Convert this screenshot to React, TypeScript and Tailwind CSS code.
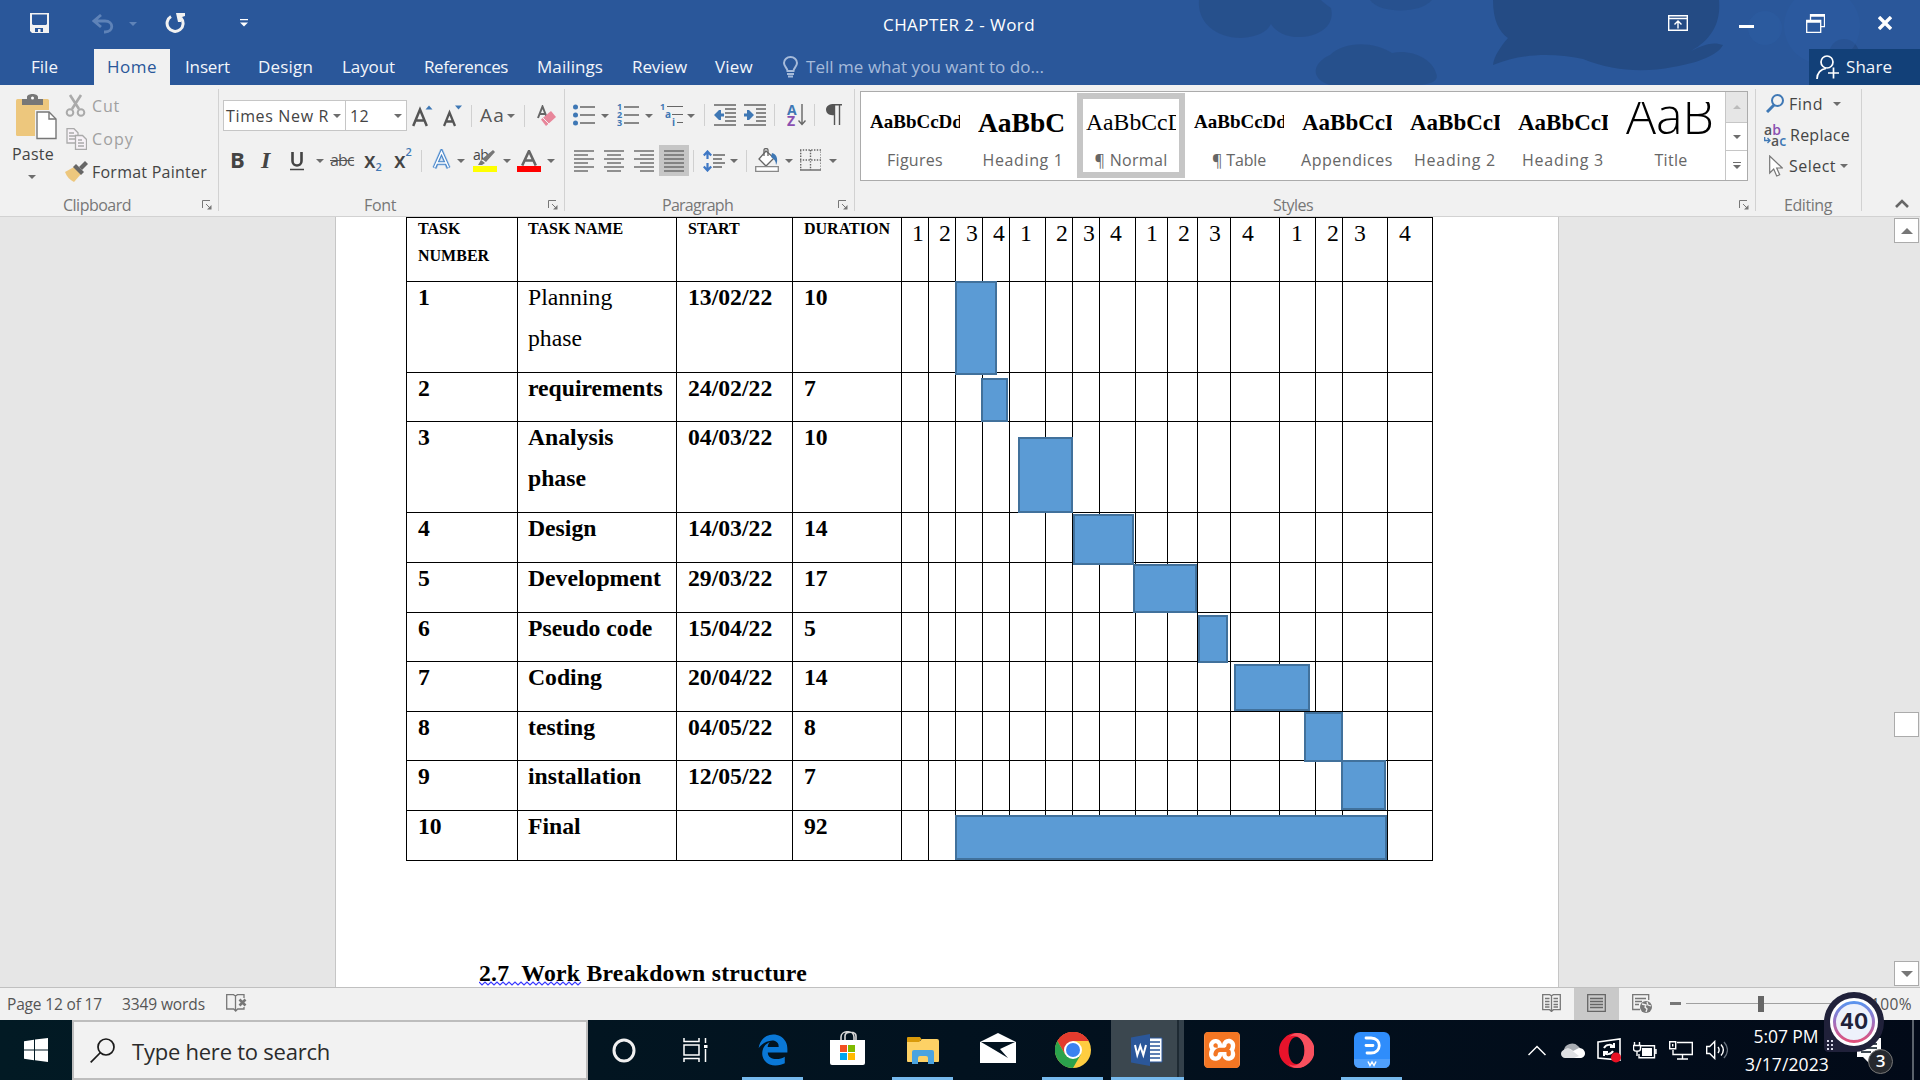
import React, { useLayoutEffect, useRef } from "react";
import { FaEdgeLegacy } from "react-icons/fa6";
import { SiXampp } from "react-icons/si";

/* Single-line text whose tracking is adjusted so it fills its box exactly. */
function Fit({ className = "", children }: { className?: string; children: string }) {
  const outer = useRef<HTMLSpanElement>(null);
  const inner = useRef<HTMLSpanElement>(null);
  useLayoutEffect(() => {
    if (!outer.current || !inner.current) return;
    inner.current.style.letterSpacing = "0px";
    const natural = inner.current.getBoundingClientRect().width;
    const room = outer.current.getBoundingClientRect().width;
    inner.current.style.letterSpacing = `${(room - natural) / children.length}px`;
  }, [children]);
  return (
    <span ref={outer} className={"block shrink-0 whitespace-pre " + className}>
      <span ref={inner}>{children}</span>
    </span>
  );
}

function Caret({ className = "" }: { className?: string }) {
  return (
    <svg className={"h-[4px] w-[8px] shrink-0 " + className} viewBox="0 0 8 4">
      <path d="M0 0h8L4 4z" fill="#6d6d6d" />
    </svg>
  );
}

const Rule = ({ className = "" }: { className?: string }) => (
  <div className={"h-[22px] w-px shrink-0 bg-[#d0d0d0] " + className} />
);

const GroupLine = () => <div className="mt-1 h-[122px] w-px shrink-0 bg-[#d2d2d2]" />;

const Launcher = ({ className = "" }: { className?: string }) => (
  <svg className={"h-[10px] w-[10px] shrink-0 " + className} viewBox="0 0 10 10" fill="none" stroke="#777">
    <path d="M.5 8V.5H8M4 4l4 4" />
    <path d="M9.500 5v4.500H5z" fill="#777" stroke="none" />
  </svg>
);

function Lines({ rows, className = "" }: { rows: number[][]; className?: string }) {
  return (
    <svg className={"h-[22px] w-[20px] shrink-0 " + className} viewBox="0 0 20 22" stroke="#666" strokeWidth="1.400">
      {rows.map(([a, b], i) => (
        <path key={i} d={`M${a} ${1 + i * 4}H${b}`} />
      ))}
    </svg>
  );
}

function TitleBar() {
  return (
    <div className="flex h-[49px] items-center text-white">
      <svg className="mt-[-3px] ml-[30px] h-[20px] w-[19px]" viewBox="0 0 19 20">
        <path d="M0 0h19v20H2l-2-2z" fill="#f2f2f2" />
        <path d="M2 1.500h15v9.500l-1 1H3l-1-1zM5 15h8v4h-2.500v-3H8v3H5z" fill="#2a579a" />
      </svg>
      <svg className="mt-[-2px] ml-[43px] h-[20px] w-[22px]" viewBox="0 0 22 20" fill="none" stroke="#5f83b8" strokeWidth="2.800">
        <path d="M9 1L2 7l7 6M2 7h11c9 0 9 11 0 11h-1" />
      </svg>
      <svg className="mt-[-2px] ml-[15px] h-[4px] w-[8px]" viewBox="0 0 8 4"><path d="M0 0h8L4 4z" fill="#5f83b8" /></svg>
      <svg className="mt-[-3px] ml-[28px] h-[21px] w-[21px]" viewBox="0 0 21 21" fill="none" stroke="#f2f2f2" strokeWidth="3">
        <path d="M6 3.500A8 8 0 1 0 16 5" />
        <path d="M11 0h9v3l-3 1-1 5h-3z" fill="#f2f2f2" stroke="none" />
      </svg>
      <svg className="mb-[4px] ml-[54px] h-[8px] w-[8px]" viewBox="0 0 8 8" fill="#fff">
        <path d="M0 0h8v1.300H0zM0 3.500h8L4 7.500z" />
      </svg>
      <Fit className="ml-[635px] w-[152px] text-[17px] leading-[20px]">CHAPTER 2 - Word</Fit>
      <svg className="mt-[-4px] ml-[633px] h-[16px] w-[20px]" viewBox="0 0 20 16" fill="none" stroke="#fff" strokeWidth="1.400">
        <path d="M.7.700h18.600v14.600H.7zM.7 3.500h18.600M10 13.500V6M6.500 9.500L10 6l3.500 3.500" />
      </svg>
      <div className="mt-[4px] ml-[51px] h-[3px] w-[15px] bg-white" />
      <svg className="mt-[-2px] ml-[52px] h-[19px] w-[19px]" viewBox="0 0 19 19" fill="none" stroke="#fff" strokeWidth="1.300">
        <path d="M.7 6.500h14v12H.7zM4.500 6V.7h14v12H15" />
        <path d="M.7 7.500h14M4 1.500h14.500" strokeWidth="2.500" />
      </svg>
      <svg className="mt-[-3px] ml-[53px] h-[14px] w-[14px]" viewBox="0 0 14 14" stroke="#fff" strokeWidth="3.400">
        <path d="M1 1l12 12M13 1L1 13" />
      </svg>
    </div>
  );
}

function Tabs() {
  return (
    <div className="flex h-[36px] items-center text-[17px] leading-[22px] text-[#f3f6fa]">
      <Fit className="ml-[31px] w-[27px]">File</Fit>
      <div className="ml-[36px] flex h-full w-[76px] items-center bg-[#f1f1f1] text-[#2a579a]">
        <Fit className="ml-[13px] w-[50px]">Home</Fit>
      </div>
      <Fit className="ml-[15px] w-[45px]">Insert</Fit>
      <Fit className="ml-[28px] w-[55px]">Design</Fit>
      <Fit className="ml-[29px] w-[53px]">Layout</Fit>
      <Fit className="ml-[29px] w-[84px]">References</Fit>
      <Fit className="ml-[29px] w-[66px]">Mailings</Fit>
      <Fit className="ml-[29px] w-[55px]">Review</Fit>
      <Fit className="ml-[28px] w-[38px]">View</Fit>
      <svg className="ml-[30px] h-[22px] w-[15px]" viewBox="0 0 15 22" fill="none" stroke="#a6bbda" strokeWidth="2">
        <path d="M4.500 15c0-3-3.500-4.500-3.500-8a6.500 6 0 0 1 13 0c0 3.500-3.500 5-3.500 8z" />
        <path d="M4 18h7M5 20.500h5" />
      </svg>
      <Fit className="ml-[8px] w-[238px] text-[#a6bbda]">Tell me what you want to do...</Fit>
      <div className="ml-auto flex h-full w-[111px] items-center bg-[#124078]">
        <svg className="ml-[7px] h-[24px] w-[23px]" viewBox="0 0 23 24" fill="none" stroke="#fff" strokeWidth="1.700">
          <circle cx="11" cy="7" r="6" />
          <path d="M1 24c0-6 4-10 9-10.500M12 18h11M17.500 12.500v11" />
        </svg>
        <Fit className="ml-[7px] w-[46px]">Share</Fit>
      </div>
    </div>
  );
}

/* Ink-splash artwork behind the window controls. */
function Backdrop() {
  return (
    <svg className="absolute top-0 right-0 h-[85px] w-[760px]" viewBox="1160 0 760 85">
      <g fill="#244b84">
        <path d="M1493 0c0 20 6 32 15 38-7 8-14 18-15 27 30-12 60-12 90-6 30 12 60 14 90 8 25-4 45-12 50-22-10-4-20 0-32 6 22-12 30-30 28-51z" />
        <path d="M1199 0c-2 20 14 38 42 38 16-1 26-6 30-14 8 14 34 18 52 6 8-6 10-14 8-22-6-4-10-8-10-8z" opacity=".6" />
        <path d="M1330 55c14-14 44-14 62-2 20-4 40 6 44 20 4 8-6 12-20 12h-86c-20-6-18-22 0-30z" opacity=".6" />
        <path d="M1370 0c10 14 50 14 62 0z" opacity=".5" />
        <circle cx="1844" cy="54" r="15" opacity=".8" />
      </g>
      <g fill="#2d5ea6" opacity=".4">
        <circle cx="1822" cy="26" r="38" />
        <circle cx="1765" cy="28" r="17" />
      </g>
    </svg>
  );
}

function ClipboardGroup() {
  return (
    <div className="flex w-[218px] shrink-0 flex-col">
      <div className="flex h-[109px]">
        <div className="w-[65px] pt-[9px]">
          <svg className="ml-[16px] h-[46px] w-[42px]" viewBox="0 0 42 46">
            <rect x="0" y="5" width="33" height="37" rx="1.500" fill="#edc77d" />
            <path d="M6 5h5V3c0-4 11-4 11 0v2h5v6H6z" fill="#777" />
            <circle cx="16.500" cy="4" r="1.500" fill="#fff" />
            <path d="M19 16h16l7 8v22H19z" fill="#f1f1f1" />
            <path d="M21 18h12l7 7v19.500H21z" fill="#fff" stroke="#777" strokeWidth="1.400" />
            <path d="M33 18v7h7" fill="none" stroke="#777" strokeWidth="1.400" />
          </svg>
          <Fit className="mt-[4px] ml-[12px] w-[42px]">Paste</Fit>
          <Caret className="mt-[11px] ml-[28px]" />
        </div>
        <div className="pt-[4px] text-[#a0a0a0]">
          <div className="flex h-[33px] items-center">
            <svg className="h-[23px] w-[21px]" viewBox="0 0 21 23" fill="none" stroke="#aaa" strokeWidth="2">
              <path d="M5 1l9 14M16 1L7 15" strokeWidth="2.600" />
              <circle cx="5" cy="18.500" r="3.300" />
              <circle cx="16" cy="18.500" r="3.300" />
            </svg>
            <Fit className="ml-[6px] w-[28px]">Cut</Fit>
          </div>
          <div className="flex h-[33px] items-center">
            <svg className="ml-px h-[22px] w-[21px]" viewBox="0 0 21 22" fill="#f7f2f7" stroke="#aaa" strokeWidth="1.300">
              <path d="M1 .7h7l4 4V15H1zM3 5h5M3 8h7M3 11h7" />
              <path d="M9.500 7.500h7l4 4v10h-11zM12 12h4M12 15h6M12 18h6" />
            </svg>
            <Fit className="ml-[5px] w-[42px]">Copy</Fit>
          </div>
          <div className="flex h-[33px] items-center text-[#444]">
            <svg className="h-[21px] w-[23px]" viewBox="0 0 23 21">
              <path d="M0 11l9-5 7 7-7 8c-4-2-7-5-9-10z" fill="#edc77d" />
              <path d="M8 6l3-3 8 8-3 3z" fill="#666" />
              <path d="M14 6l6-6 3 3-6 6z" fill="#666" />
            </svg>
            <Fit className="ml-[4px] w-[115px]">Format Painter</Fit>
          </div>
        </div>
      </div>
      <div className="flex items-center pt-px text-[#777]">
        <Fit className="ml-[63px] w-[68px]">Clipboard</Fit>
        <Launcher className="ml-[71px]" />
      </div>
    </div>
  );
}

function FontGroup() {
  return (
    <div className="flex w-[345px] shrink-0 flex-col pt-[15px] text-[#444]">
      <div className="flex h-[31px] items-center">
        <div className="ml-[4px] flex h-[31px] w-[123px] items-center border border-[#c6c6c6] bg-white">
          <Fit className="ml-[2px] w-[103px]">Times New R</Fit>
          <Caret className="ml-[4px]" />
        </div>
        <div className="-ml-px flex h-[31px] w-[62px] items-center border border-[#c6c6c6] bg-white">
          <Fit className="ml-[4px] w-[19px]">12</Fit>
          <Caret className="ml-[25px]" />
        </div>
        <svg className="ml-[5px] h-[22px] w-[21px]" viewBox="0 0 21 22">
          <path d="M1.200 21L8 4.500 14.800 21M3.500 15.500h9" fill="none" stroke="#555" strokeWidth="2.500" />
          <path d="M13.500 4.500h7l-3.500-4z" fill="#3f78b5" />
        </svg>
        <svg className="ml-[10px] h-[22px] w-[19px]" viewBox="0 0 19 22">
          <path d="M1 21L6.500 7.500 12 21M3 16.500h7" fill="none" stroke="#555" strokeWidth="2.300" />
          <path d="M12 .5h7l-3.500 4z" fill="#3f78b5" />
        </svg>
        <Rule className="ml-[9px]" />
        <Fit className="mt-[-2px] ml-[8px] w-[25px] text-[19px] text-[#555]">Aa</Fit>
        <Caret className="ml-[2px]" />
        <Rule className="ml-[9px]" />
        <svg className="ml-[12px] h-[22px] w-[20px]" viewBox="0 0 20 22">
          <path d="M1 13L5.500 1.500 10 13M3 9h5" fill="none" stroke="#666" strokeWidth="2" />
          <path d="M4 14.500L14 6l5 6-10 9z" fill="#e8869a" />
          <path d="M6 13l6 6" stroke="#f1f1f1" />
        </svg>
      </div>
      <div className="mt-[14px] flex h-[31px] items-center">
        <span className="mt-[-3px] ml-[11px] w-[14px] text-[22px] leading-[28px] font-bold">B</span>
        <span className="mt-[-2px] ml-[17px] w-[11px] font-['Liberation_Serif'] text-[24px] leading-[28px] font-bold italic">I</span>
        <svg className="ml-[18px] h-[20px] w-[14px]" viewBox="0 0 14 20" fill="none" stroke="#444">
          <path d="M2.500 1v9c0 6 9 6 9 0V1" strokeWidth="2.600" />
          <path d="M0 18.500h14" strokeWidth="1.500" />
        </svg>
        <Caret className="ml-[12px]" />
        <Fit className="mt-[-2px] ml-[6px] w-[24px] text-[16px] leading-[20px] text-[#555] line-through">abc</Fit>
        <div className="mt-[-2px] ml-[10px] flex w-[20px] items-center">
          <span className="text-[21px] leading-[22px] font-semibold">x</span>
          <span className="mt-[14px] text-[11px] leading-[14px] font-semibold text-[#3f78b5]">2</span>
        </div>
        <div className="mt-[-2px] ml-[10px] flex w-[20px] items-center">
          <span className="text-[21px] leading-[22px] font-semibold">x</span>
          <span className="-mt-[16px] text-[11px] leading-[14px] font-semibold text-[#3f78b5]">2</span>
        </div>
        <Rule className="ml-[7px]" />
        <svg className="mt-[-2px] ml-[10px] h-[22px] w-[19px]" viewBox="0 0 19 22" fill="none">
          <path d="M2.500 19L9.500 3l7 16M5 14h9" stroke="#b8d2ee" strokeWidth="5" />
          <path d="M2.500 19L9.500 3l7 16M5 14h9" stroke="#4a86c8" strokeWidth="3.600" />
          <path d="M2.500 18.500L9.500 3l7 15.500M5 14h9" stroke="#fff" strokeWidth="1.500" />
        </svg>
        <Caret className="ml-[6px]" />
        <div className="ml-[8px] w-[24px]">
          <div className="flex h-[16px]">
            <span className="text-[14px] leading-[10px] tracking-[-0.5px]">ab</span>
            <svg className="-ml-[12px] h-[17px] w-[19px]" viewBox="0 0 19 17">
              <path d="M17 0l2 2-9 10-4-3zM5 10l4 3-3 2H2z" fill="#777" />
            </svg>
          </div>
          <div className="h-[6px] bg-[#ffff00]" />
        </div>
        <Caret className="ml-[6px]" />
        <div className="ml-[6px] w-[24px]">
          <svg className="ml-[4px] h-[16px] w-[16px]" viewBox="0 0 16 16">
            <path d="M1.200 15.500L8 1l6.800 14.500M4 10.500h8" fill="none" stroke="#666" strokeWidth="2.600" />
          </svg>
          <div className="h-[6px] bg-[#ff0000]" />
        </div>
        <Caret className="ml-[6px]" />
      </div>
      <div className="mt-[19px] flex items-center text-[#777]">
        <Fit className="ml-[145px] w-[32px]">Font</Fit>
        <Launcher className="ml-[152px]" />
      </div>
    </div>
  );
}

function ParagraphGroup() {
  const wide = [0, 20];
  const n = "text-[9px] leading-[7px] font-bold text-[#3f78b5]";
  return (
    <div className="flex w-[289px] shrink-0 flex-col pt-[14px]">
      <div className="flex h-[31px] items-center">
        <svg className="ml-[8px] h-[22px] w-[22px]" viewBox="0 0 22 22" stroke="#666" strokeWidth="1.400">
          <path d="M7 3h15M7 11h15M7 19h15" />
          <g fill="#3f78b5" stroke="none"><circle cx="2.500" cy="3" r="2.500" /><circle cx="2.500" cy="11" r="2.500" /><circle cx="2.500" cy="19" r="2.500" /></g>
        </svg>
        <Caret className="mt-[2px] ml-[6px]" />
        <div className="ml-[8px] flex h-[22px] w-[22px] items-center gap-[1px]">
          <div className={"flex w-[6px] flex-col gap-px " + n}><span>1</span><span>2</span><span>3</span></div>
          <svg className="h-[22px] w-[15px]" viewBox="0 0 15 22" stroke="#666" strokeWidth="1.400"><path d="M0 3h15M0 11h15M0 19h15" /></svg>
        </div>
        <Caret className="mt-[2px] ml-[6px]" />
        <div className={"ml-[7px] flex h-[24px] w-[23px] flex-col gap-px " + n}>
          <div className="flex items-center"><span className="w-[7px]">1</span><div className="h-px w-[16px] bg-[#666]" /></div>
          <div className="flex items-center pl-[5px]"><span className="w-[7px] text-[10px]">a</span><div className="h-px w-[11px] bg-[#666]" /></div>
          <div className="flex items-center pl-[12px]"><span className="w-[5px] text-[10px]">i</span><div className="h-px w-[6px] bg-[#666]" /></div>
        </div>
        <Caret className="mt-[2px] ml-[4px]" />
        <Rule className="ml-[9px]" />
        <svg className="ml-[9px] h-[22px] w-[22px]" viewBox="0 0 22 22" stroke="#666" strokeWidth="1.300">
          <path d="M0 1h22M11 5h11M11 9h11M11 13h11M11 17h11M0 21h22" />
          <path d="M0 11l5-5h2v3.500h3v3H7V16H5z" fill="#3f78b5" stroke="none" />
        </svg>
        <svg className="ml-[8px] h-[22px] w-[22px]" viewBox="0 0 22 22" stroke="#666" strokeWidth="1.300">
          <path d="M0 1h22M12 5h10M12 9h10M12 13h10M12 17h10M0 21h22" />
          <path d="M10 11L5 6H3v3.500H0v3h3V16h2z" fill="#3f78b5" stroke="none" />
        </svg>
        <Rule className="ml-[8px]" />
        <div className="ml-[12px] flex w-[19px] items-center">
          <div className="flex w-[11px] flex-col text-[14px] leading-[11px] font-bold">
            <span className="text-[#3f78b5]">A</span><span className="text-[#8a50b0]">Z</span>
          </div>
          <svg className="h-[22px] w-[8px]" viewBox="0 0 8 22" fill="none" stroke="#666" strokeWidth="1.400"><path d="M4 0v20M.5 16.500L4 20.500l3.500-4" /></svg>
        </div>
        <Rule className="ml-[8px]" />
        <svg className="ml-[11px] h-[21px] w-[16px]" viewBox="0 0 16 21" fill="none" stroke="#555" strokeWidth="1.400">
          <path d="M7 .7h9M8.500 1v20M13.500 1v20" />
          <path d="M8.500 0v11C3 12 0 9 0 5.500S3 0 8.500 0z" fill="#555" stroke="none" />
        </svg>
      </div>
      <div className="mt-[15px] flex h-[31px] items-center">
        <Lines className="ml-[9px]" rows={[wide, [0, 14], wide, [0, 14], wide, [0, 14]]} />
        <Lines className="ml-[10px]" rows={[wide, [3, 17], wide, [3, 17], wide, [3, 17]]} />
        <Lines className="ml-[10px]" rows={[wide, [6, 20], wide, [6, 20], wide, [6, 20]]} />
        <div className="ml-[5px] flex h-[31px] w-[30px] items-center justify-center bg-[#c6c6c6]">
          <Lines rows={[wide, wide, wide, wide, wide, wide]} />
        </div>
        <Rule className="ml-[4px]" />
        <svg className="ml-[9px] h-[22px] w-[22px]" viewBox="0 0 22 22" stroke="#666" strokeWidth="1.400">
          <path d="M10 5h12M10 9h9M10 13h12M10 17h9" />
          <path d="M4.500 2v7M4.500 13v7M.8 5.500l3.700-4 3.700 4M.8 16.500l3.700 4 3.700-4" fill="none" stroke="#3f78c5" strokeWidth="2.200" />
        </svg>
        <Caret className="ml-[5px]" />
        <Rule className="ml-[8px]" />
        <svg className="mt-[-2px] ml-[8px] h-[24px] w-[24px]" viewBox="0 0 24 24" fill="none" stroke="#666" strokeWidth="1.300">
          <path d="M11 3l8 7-8 8-7-7z" fill="#fff" />
          <path d="M9 8V2c0-2 4-2 4 0v6" />
          <path d="M17 5c6 1 6 9 4 12 0-4-2-6-5-8z" fill="#3f78b5" stroke="none" />
          <path d="M.7 18.700h22.600v4.600H.7z" fill="#fff" stroke="#888" />
        </svg>
        <Caret className="ml-[6px]" />
        <svg className="mt-[-2px] ml-[7px] h-[22px] w-[21px]" viewBox="0 0 21 22" fill="none" stroke="#666" strokeWidth="1.400">
          <path d="M0 1h21v20M.7 1v20M10.500 1v20M0 11h21" strokeDasharray="1.400 1.400" />
          <path d="M0 21h21" />
        </svg>
        <Caret className="ml-[8px]" />
      </div>
      <div className="mt-[19px] flex items-center text-[#777]">
        <Fit className="ml-[97px] w-[71px]">Paragraph</Fit>
        <Launcher className="ml-[105px]" />
      </div>
    </div>
  );
}

const STYLES = [
  { t: "AaBbCcDd", f: "font-['Liberation_Serif'] text-[19px] leading-[40px] font-bold", n: "Figures", w: "w-[56px]" },
  { t: "AaBbC", f: "font-['Liberation_Serif'] text-[27.5px] leading-[42px] font-bold", n: "Heading 1", w: "w-[81px]" },
  { t: "AaBbCcD", f: "font-['Liberation_Serif'] text-[23.7px] leading-[40px]", n: "¶ Normal", w: "w-[73px]" },
  { t: "AaBbCcDd", f: "font-['Liberation_Serif'] text-[19px] leading-[40px] font-bold", n: "¶ Table", w: "w-[54px]" },
  { t: "AaBbCcD", f: "font-['Liberation_Serif'] text-[23px] leading-[42px] font-bold", n: "Appendices", w: "w-[92px]" },
  { t: "AaBbCcD", f: "font-['Liberation_Serif'] text-[23px] leading-[42px] font-bold", n: "Heading 2", w: "w-[82px]" },
  { t: "AaBbCcD", f: "font-['Liberation_Serif'] text-[23px] leading-[42px] font-bold", n: "Heading 3", w: "w-[82px]" },
  { t: "AaB", f: "text-[50px] leading-[26px] font-light", n: "Title", w: "w-[33px]" },
];

function StylesGroup() {
  return (
    <div className="flex w-[900px] shrink-0 flex-col pt-[6px]">
      <div className="ml-[5px] flex h-[90px] w-[888px] border border-[#ababab] bg-white">
        {STYLES.map((s, i) => (
          <div
            key={s.n}
            className={
              "mt-px flex h-[85px] w-[108px] shrink-0 flex-col items-center " +
              (i === 2 ? "border-[6px] border-[#c6c6c6] pt-[3px]" : "pt-[9px]")
            }
          >
            <div className={"h-[40px] w-[90px] shrink-0 overflow-hidden whitespace-nowrap text-black " + s.f}>{s.t}</div>
            <Fit className={"mt-[8px] text-[#666] " + s.w}>{s.n}</Fit>
          </div>
        ))}
        <div className="flex flex-1 flex-col border-l border-[#c6c6c6]">
          <div className="flex h-[31px] items-center justify-center border-b border-[#c6c6c6] bg-[#e6e6e6]">
            <svg className="h-[4px] w-[8px]" viewBox="0 0 8 4"><path d="M0 4h8L4 0z" fill="#bbb" /></svg>
          </div>
          <div className="flex h-[28px] items-center justify-center border-b border-[#c6c6c6]"><Caret /></div>
          <div className="flex flex-1 flex-col items-center justify-center gap-[2px]">
            <div className="h-px w-[8px] bg-[#6d6d6d]" />
            <Caret />
          </div>
        </div>
      </div>
      <div className="mt-[14px] flex items-center text-[#777]">
        <Fit className="ml-[418px] w-[40px]">Styles</Fit>
        <Launcher className="ml-[426px]" />
      </div>
    </div>
  );
}

function EditingGroup() {
  return (
    <div className="flex w-[105px] shrink-0 flex-col pt-[3px] text-[#444]">
      <div className="flex h-[31px] items-center">
        <svg className="ml-[10px] h-[19px] w-[18px]" viewBox="0 0 18 19" fill="none" stroke="#3f78b5">
          <circle cx="11.500" cy="6.500" r="5.500" strokeWidth="2" />
          <path d="M8 11L1 18" strokeWidth="3" />
        </svg>
        <Fit className="ml-[5px] w-[34px]">Find</Fit>
        <Caret className="ml-[10px]" />
      </div>
      <div className="flex h-[31px] items-center">
        <div className="ml-[8px] w-[23px] text-[14px] leading-[11px] font-semibold text-[#555]">
          <div>a<span className="text-[#8a50b0]">b</span></div>
          <div className="flex items-center">
            <svg className="h-[7px] w-[7px]" viewBox="0 0 7 7" fill="none" stroke="#3f78b5" strokeWidth="1.300"><path d="M.7 0v3.500H6M3.500 1L6 3.500 3.500 6" /></svg>
            a<span className="text-[#3f78b5]">c</span>
          </div>
        </div>
        <Fit className="ml-[3px] w-[60px]">Replace</Fit>
      </div>
      <div className="flex h-[31px] items-center">
        <svg className="ml-[13px] h-[22px] w-[14px]" viewBox="0 0 14 22" fill="#fff" stroke="#777" strokeWidth="1.200">
          <path d="M.7 1v17l4-4 3 7 3-1.300-3-6.700h5.600z" />
        </svg>
        <Fit className="ml-[6px] w-[47px]">Select</Fit>
        <Caret className="ml-[4px]" />
      </div>
      <div className="mt-[14px] flex text-[#777]"><Fit className="ml-[28px] w-[48px]">Editing</Fit></div>
    </div>
  );
}

const GRID =
  "grid-cols-[111px_159px_116px_109px_27px_27px_27px_27px_36px_27px_27px_36px_32px_30px_33px_49px_36px_27px_45px_45px] grid-rows-[64px_91px_49px_91px_50px_50px_49px_50px_49px_50px_50px]";

const TASKS: string[][] = [
  ["1", "Planning\nphase", "13/02/22", "10"],
  ["2", "requirements", "24/02/22", "7"],
  ["3", "Analysis\nphase", "04/03/22", "10"],
  ["4", "Design", "14/03/22", "14"],
  ["5", "Development", "29/03/22", "17"],
  ["6", "Pseudo code", "15/04/22", "5"],
  ["7", "Coding", "20/04/22", "14"],
  ["8", "testing", "04/05/22", "8"],
  ["9", "installation", "12/05/22", "7"],
  ["10", "Final", "", "92"],
];
const HEAD = ["TASK\nNUMBER", "TASK NAME", "START", "DURATION"];
const WEEKS = ["1", "2", "3", "4", "1", "2", "3", "4", "1", "2", "3", "4", "1", "2", "3", "4"];

/* left, top, width, height of each Gantt bar, from the table's corner */
const BARS = [
  [549, 64, 42, 94],
  [575, 161, 27, 44],
  [612, 220, 55, 76],
  [667, 297, 61, 51],
  [727, 347, 64, 49],
  [792, 398, 30, 48],
  [828, 447, 76, 47],
  [898, 495, 39, 50],
  [935, 543, 45, 50],
  [549, 598, 432, 45],
];

function GanttTable() {
  return (
    <div className="relative ml-[70px] w-[1027px]">
      <div className={"grid border-t border-l border-black " + GRID}>
        {HEAD.map((h, c) => (
          <div key={h} className={"border-r border-b border-black " + (c === 1 ? "pl-[10px]" : "pl-[11px]")}>
            <div className="-mt-[3px] text-[16px] leading-[27px] font-bold whitespace-pre">{h}</div>
          </div>
        ))}
        {WEEKS.map((w, i) => (
          <div
            key={i}
            className={
              "border-r border-b border-black pt-[2px] text-[23.700px] leading-[27px] " + (i > 9 ? "pl-[11px]" : "pl-[10px]")
            }
          >
            {w}
          </div>
        ))}
        {TASKS.map((row, r) => (
          <React.Fragment key={r}>
            {row.map((t, c) => (
              <div key={c} className={"border-r border-b border-black " + (c === 1 ? "pl-[10px]" : "pl-[11px]")}>
                <div className={"-mt-[5px] text-[23.700px] leading-[41px] whitespace-pre " + (r === 0 && c === 1 ? "" : "font-bold")}>{t}</div>
              </div>
            ))}
            {WEEKS.map((_, c) => (
              <div key={"w" + c} className="border-r border-b border-black" />
            ))}
          </React.Fragment>
        ))}
      </div>
      {BARS.map(([left, top, width, height], i) => (
        <div key={i} className="absolute border-2 border-[#41719c] bg-[#5b9bd5]" style={{ left, top, width, height }} />
      ))}
    </div>
  );
}

function ScrollBar() {
  const box = "flex h-[25px] w-[25px] shrink-0 items-center justify-center border border-[#ababab] bg-white";
  return (
    <div className="mr-[1px] ml-auto flex w-[25px] flex-col pt-[1px] pb-[1px]">
      <div className={box}><svg className="h-[6px] w-[12px]" viewBox="0 0 12 6"><path d="M0 6h12L6 0z" fill="#777" /></svg></div>
      <div className={box + " mt-[469px]"} />
      <div className={box + " mt-auto"}><svg className="h-[6px] w-[12px]" viewBox="0 0 12 6"><path d="M0 0h12L6 6z" fill="#777" /></svg></div>
    </div>
  );
}

function Document() {
  return (
    <div className="flex h-[770px] overflow-hidden bg-[#e6e6e6]">
      <div className="ml-[335px] w-[1224px] shrink-0 border-x border-[#c6c6c6] bg-white font-['Liberation_Serif'] text-black">
        <GanttTable />
        <div className="relative mt-[99px] ml-[143px] h-[28px]">
          <Fit className="w-[328px] text-[23.700px] leading-[27px] font-bold">{"2.7  Work Breakdown structure"}</Fit>
          <svg className="absolute top-[21px] left-0 h-[5px] w-[103px]" viewBox="0 0 103 5" fill="none" stroke="#3a3aff" strokeWidth="1.200">
            <path d={"M0 1" + Array.from({ length: 17 }, () => "l3 3l3 -3").join("")} />
          </svg>
        </div>
      </div>
      <ScrollBar />
    </div>
  );
}

function StatusBar() {
  return (
    <div className="flex h-[33px] items-center border-t border-[#c0c0c0] bg-[#f1f1f1] text-[15.500px] leading-[20px] text-[#555]">
      <Fit className="mt-[-1px] ml-[7px] w-[95px]">Page 12 of 17</Fit>
      <Fit className="mt-[-1px] ml-[20px] w-[83px]">3349 words</Fit>
      <svg className="mt-[-2px] ml-[21px] h-[18px] w-[21px]" viewBox="0 0 21 18" fill="none" stroke="#777" strokeWidth="1.300">
        <path d="M9.500 16V2L7.500.700H.7V15h7l2 2 2-2H18v-2M9.500 2l2-1.300H18V4" />
        <path d="M13.500 5.500l6 6M19.500 5.500l-6 6" strokeWidth="2.600" />
      </svg>
      <svg className="mt-[-2px] ml-auto h-[18px] w-[19px]" viewBox="0 0 19 18" fill="none" stroke="#777" strokeWidth="1.300">
        <path d="M.7.700h7l1.800 1 1.800-1h7v15h-7L9.500 17.500 7.700 15.700h-7zM9.500 2v15M3 4.500h4.500M3 7.500h4.500M3 10.500h4.500M3 13h4.500M11.500 4.500H16M11.500 7.500H16M11.500 10.500H16M11.500 13H16" />
      </svg>
      <div className="ml-[13px] flex h-full w-[45px] items-center justify-center bg-[#c9c9c9]">
        <svg className="mt-[-2px] h-[18px] w-[19px]" viewBox="0 0 19 18" fill="none" stroke="#666" strokeWidth="1.300">
          <path d="M.7.700h17.600v16.600H.7zM3 4.500h13M3 7.500h13M3 10.500h13M3 13.500h13" />
        </svg>
      </div>
      <svg className="mt-[-1px] ml-[13px] h-[19px] w-[20px]" viewBox="0 0 20 19" fill="none" stroke="#777" strokeWidth="1.300">
        <path d="M8 15.500H.7V.700h16V6M3 4.500h11M3 7.500h7M3 10.500h4" />
        <circle cx="14" cy="13" r="6" fill="#777" stroke="none" />
        <path d="M10 10l4 1-1 2 2 2-1 3M15 8l1 3 3 1" stroke="#f1f1f1" />
      </svg>
      <div className="mt-[-1px] ml-[18px] h-[3px] w-[11px] bg-[#777]" />
      <div className="mt-[-1px] ml-[5px] h-px w-[72px] bg-[#a0a0a0]" />
      <div className="mt-[-1px] h-[16px] w-[6px] bg-[#666]" />
      <div className="mt-[-1px] h-px w-[72px] bg-[#a0a0a0]" />
      <Fit className="mt-[-1px] mr-[8px] ml-[35px] w-[41px]">100%</Fit>
    </div>
  );
}

/* Floating counter bubble that hovers above the tray. */
function CounterBubble() {
  return (
    <div className="absolute top-[991px] left-[1823px] flex h-[62px] w-[62px] items-center justify-center">
      <svg className="absolute inset-0 h-[62px] w-[62px]" viewBox="0 0 62 62">
        <defs>
          <linearGradient id="ring" x1="0" y1="0" x2="0" y2="1">
            <stop offset="0" stopColor="#5b93ee" />
            <stop offset=".5" stopColor="#a070c0" />
            <stop offset="1" stopColor="#e0507a" />
          </linearGradient>
        </defs>
        <path d="M31 1a30 30 0 1 1 0 60H6q-5 0-5-5V31A30 30 0 0 1 31 1z" fill="#20213a" />
        <circle cx="31" cy="31" r="24" fill="#fff" />
        <circle cx="31" cy="31" r="19.500" fill="#eef1fb" stroke="url(#ring)" strokeWidth="3" />
        <g fill="#d8d8e8">
          <rect x="4" y="49" width="2" height="2" /><rect x="8" y="49" width="2" height="2" />
          <rect x="4" y="53" width="2" height="2" /><rect x="8" y="53" width="2" height="2" />
          <rect x="4" y="57" width="2" height="2" /><rect x="8" y="57" width="2" height="2" />
        </g>
      </svg>
      <span className="relative font-['Inter'] text-[21px] leading-[24px] font-bold text-[#20213a]">40</span>
    </div>
  );
}

function TaskButton({ className = "", active = false, children }: { className?: string; active?: boolean; children: React.ReactNode }) {
  return (
    <div className={"flex h-[60px] w-[61px] shrink-0 flex-col items-center " + className}>
      <div className="flex h-[57px] items-center pt-[3px]">{children}</div>
      {active && <div className="h-[3px] w-full bg-[#76b9ed]" />}
    </div>
  );
}

function Taskbar() {
  return (
    <div className="flex h-[60px] items-center bg-linear-to-r from-[#021a24] via-[#02121f] to-[#020a18] text-white">
      <svg className="ml-[24px] h-[24px] w-[24px] shrink-0" viewBox="0 0 24 24" fill="#fff">
        <path d="M0 3.200l10-1.400v9.700H0zM11 1.600L24 0v11.500H11zM0 12.500h10v9.700L0 20.800zM11 12.500h13V24l-13-1.800z" />
      </svg>
      <div className="ml-[24px] flex h-[60px] w-[516px] shrink-0 items-center border-2 border-[#bdbdbd] bg-[#f2f2f2]">
        <svg className="ml-[16px] h-[25px] w-[25px]" viewBox="0 0 25 25" fill="none" stroke="#1a1a1a" strokeWidth="1.700">
          <circle cx="16" cy="9" r="8" />
          <path d="M10.500 14.500L.7 24.300" />
        </svg>
        <Fit className="mt-[2px] ml-[17px] w-[198px] text-[22px] leading-[28px] text-[#2b2b2b]">Type here to search</Fit>
      </div>
      <svg className="ml-[24px] h-[25px] w-[24px] shrink-0" viewBox="0 0 24 25"><ellipse cx="12" cy="12.500" rx="10" ry="10.500" fill="none" stroke="#f0f0f0" strokeWidth="3" /></svg>
      <svg className="ml-[47px] h-[24px] w-[25px] shrink-0" viewBox="0 0 25 24" fill="none" stroke="#fff" strokeWidth="1.500">
        <path d="M1 0v3.500h15V0M1 7h15v10H1zM1 24v-3.500h15V24M22.500 0v5M22.500 11v13" />
        <path d="M21 7h3.500v3H21z" fill="#fff" stroke="none" />
      </svg>
      <TaskButton className="ml-[34px]" active><FaEdgeLegacy className="h-[32px] w-[32px] text-[#0a78d7]" /></TaskButton>
      <TaskButton className="ml-[14px]">
        <svg className="mb-[3px] h-[35px] w-[35px]" viewBox="0 0 35 35">
          <path d="M11 9V6c0-7 13-7 13 0v3M15 9V5c0-5 11-5 11 0v4" fill="none" stroke="#d8d8d8" strokeWidth="1.600" />
          <path d="M0 9h35v23q0 2-2 2H2q-2 0-2-2z" fill="#fff" />
          <path d="M10 14h7v7h-7z" fill="#f25022" /><path d="M18 14h7v7h-7z" fill="#7fba00" />
          <path d="M10 22h7v7h-7z" fill="#00a4ef" /><path d="M18 22h7v7h-7z" fill="#ffb900" />
        </svg>
      </TaskButton>
      <TaskButton className="ml-[14px]" active>
        <svg className="h-[27px] w-[32px]" viewBox="0 0 32 27">
          <path d="M0 1q0-1 1-1h12l2 3h-2v3H0z" fill="#d99a0b" />
          <path d="M0 5h12l3-3h15q2 0 2 2v20q0 1-1 1H1q-1 0-1-1z" fill="#fdd165" />
          <path d="M5 27V15q0-2 2-2h18q2 0 2 2v12h-6v-6q0-2-2-2h-6q-2 0-2 2v6z" fill="#4aa3e0" />
        </svg>
      </TaskButton>
      <TaskButton className="ml-[14px]">
        <svg className="mb-[4px] h-[30px] w-[36px]" viewBox="0 0 36 30">
          <path d="M0 9L18 0l18 9v21H0z" fill="#fff" />
          <path d="M1 9h34L20 16l8 9-15-9z" fill="#02121f" />
        </svg>
      </TaskButton>
      <TaskButton className="ml-[14px]" active>
        <svg className="h-[36px] w-[36px]" viewBox="0 0 36 36">
          <circle cx="18" cy="18" r="18" fill="#ffcd40" />
          <path d="M18 18L2.400 9A18 18 0 0 1 33.600 9H18z" fill="#e33b2e" />
          <path d="M18 9H33.600A18 18 0 0 0 2.400 9l7.800 13.500z" fill="#e33b2e" />
          <path d="M2.400 9A18 18 0 0 0 18 36l7.800-13.500H10.200z" fill="#2ba24c" />
          <circle cx="18" cy="18" r="9" fill="#fff" /><circle cx="18" cy="18" r="7" fill="#3b82f0" />
        </svg>
      </TaskButton>
      <div className="ml-[8px] flex h-[60px] w-[73px] shrink-0 flex-col bg-[#3b474f]">
        <div className="flex h-[57px]">
          <svg className="mt-[14px] ml-[20px] h-[32px] w-[32px]" viewBox="0 0 32 32">
            <path d="M17 4h14v24H17z" fill="#fff" stroke="#2b579a" />
            <path d="M19 8h10M19 12h10M19 16h10M19 20h10M19 24h10" stroke="#2b579a" strokeWidth="1.700" />
            <path d="M0 3.500L19 0v32L0 28.500z" fill="#2b579a" />
            <path d="M4 11l2.300 10L9.300 12l3 9L15 11" fill="none" stroke="#fff" strokeWidth="2" />
          </svg>
          <div className="ml-auto w-[7px] border-l-2 border-[#1e2a33] bg-[#33404a]" />
        </div>
        <div className="h-[3px] bg-[#76b9ed]" />
      </div>
      <TaskButton className="ml-[7px]">
        <div className="flex h-[36px] w-[36px] items-center justify-center rounded-[5px] bg-white"><SiXampp className="h-[36px] w-[36px] text-[#f37623]" /></div>
      </TaskButton>
      <TaskButton className="ml-[14px]">
        <svg className="h-[35px] w-[35px]" viewBox="0 0 35 35">
          <path fillRule="evenodd" d="M17.500 0a17.500 17.500 0 1 0 0 35 17.500 17.500 0 0 0 0-35zm0 4c5 0 8 6 8 13.500S22.500 31 17.500 31s-8-6-8-13.500S12.500 4 17.500 4z" fill="#e8132b" />
          <path fillRule="evenodd" d="M18 0a17.500 17.500 0 0 1 0 35c-4 0-7-2-8-4 8 5 15.500-3 15.500-13.500S18 0 10 4c2-2 5-4 8-4z" fill="#f8505e" />
        </svg>
      </TaskButton>
      <TaskButton className="ml-[14px]" active>
        <svg className="h-[36px] w-[36px]" viewBox="0 0 36 36">
          <rect width="36" height="36" rx="6" fill="#2f8dfb" />
          <path d="M0 27h36v3q0 6-6 6H6q-6 0-6-6z" fill="#4f9ffc" />
          <path d="M12 6h5c11 0 11 15 0 15h-4M12 13.500h7" fill="none" stroke="#fff" strokeWidth="2.800" strokeLinecap="round" />
          <path d="M14 29.500l2 4 2-3.500 2 3.500 2-4" fill="none" stroke="#fff" strokeWidth="1.500" />
        </svg>
      </TaskButton>
      <svg className="ml-[126px] h-[11px] w-[18px] shrink-0" viewBox="0 0 18 11" fill="none" stroke="#fff" strokeWidth="1.500"><path d="M.5 10L9 1.500l8.500 8.500" /></svg>
      <svg className="ml-[15px] h-[17px] w-[24px] shrink-0" viewBox="0 0 24 17">
        <path d="M3 8a8 7 0 0 1 14-4l4 4v5H3z" fill="#a9adb3" />
        <path d="M5 16a5 5 0 0 1 0-9c3-1 5 0 7 2l6-3c4 0 6 3 6 5.500S22 16 19 16z" fill="#fff" />
        <path d="M4 16h9l5-2-9-7c-4-1-9 1-9 5 0 2 2 4 4 4z" fill="#dfe1e4" />
      </svg>
      <svg className="ml-[12px] h-[25px] w-[25px] shrink-0" viewBox="0 0 25 25" fill="none" stroke="#fff" strokeWidth="1.600">
        <path d="M1 4l22-3v21L1 20z" />
        <path d="M7 10c2-4 8-4 9-1M17 5v4h-4M16 13c-2 4-8 4-9 1M7 18v-4h4" strokeWidth="2" />
        <circle cx="19" cy="19.500" r="5" fill="#e81123" stroke="none" />
      </svg>
      <svg className="ml-[11px] h-[18px] w-[24px] shrink-0" viewBox="0 0 24 18" fill="none" stroke="#fff" strokeWidth="1.400">
        <path d="M8 4.700h13.500v12H6V13M23 8v5M1.500 1v3M6.500 1v3M.5 4.500h7V8c0 3-7 3-7 0zM4 10v5" />
        <path d="M9 7h10v8H9z" fill="#fff" stroke="none" />
      </svg>
      <svg className="ml-[12px] h-[19px] w-[24px] shrink-0" viewBox="0 0 24 19" fill="none" stroke="#fff" strokeWidth="1.400">
        <path d="M8 1.500h15.300v12H4V9M13.500 13.500v4M8 18h11M.7.700h6v7h-6zM3.700 3v2.500" />
      </svg>
      <svg className="ml-[13px] h-[20px] w-[22px] shrink-0" viewBox="0 0 22 20" fill="none" stroke="#fff" strokeWidth="1.400">
        <path d="M.7 6.500h3l5-5v17l-5-5h-3zM12 7c1.500 2 1.500 4 0 6M15 4.500c3 3.500 3 7.500 0 11" />
        <path d="M18 2c4.500 5 4.500 11 0 16" stroke="#66707c" />
      </svg>
      <div className="ml-[17px] flex w-[84px] shrink-0 flex-col items-center text-[17.500px] leading-[28px]">
        <Fit className="ml-[-2px] w-[65px]">5:07 PM</Fit>
        <Fit className="w-[84px]">3/17/2023</Fit>
      </div>
      <div className="relative ml-[28px] h-[25px] w-[25px] shrink-0">
        <svg className="h-[25px] w-[25px]" viewBox="0 0 25 25">
          <path d="M0 0h24v19H12v6l-6-6H0z" fill="#fff" />
          <path d="M4 6h16M4 10h16M4 14h10" stroke="#02101c" strokeWidth="1.400" />
        </svg>
        <div className="absolute top-[11px] left-[11px] flex h-[25px] w-[25px] items-center justify-center rounded-full border border-[#777] bg-[#26292e] text-[17px] leading-[20px] font-semibold">3</div>
      </div>
      <div className="mr-[6px] ml-auto h-[60px] w-[2px] bg-[#5a626b]" />
    </div>
  );
}

export default function App() {
  return (
    <div className="relative h-[1080px] w-[1920px] overflow-hidden bg-[#e6e6e6] font-['Open_Sans',sans-serif]">
      <div className="relative h-[85px] bg-[#2a579a]">
        <Backdrop />
        <div className="relative">
          <TitleBar />
          <Tabs />
        </div>
      </div>
      <div className="flex h-[132px] border-b border-[#d2d2d2] bg-[#f1f1f1] text-[16px] leading-[20px] text-[#444]">
        <ClipboardGroup />
        <GroupLine />
        <FontGroup />
        <GroupLine />
        <ParagraphGroup />
        <GroupLine />
        <StylesGroup />
        <GroupLine />
        <EditingGroup />
        <GroupLine />
        <svg className="mt-[114px] ml-[33px] h-[9px] w-[14px]" viewBox="0 0 14 9" fill="none" stroke="#666" strokeWidth="2.600">
          <path d="M1 8l6-6 6 6" />
        </svg>
      </div>
      <Document />
      <StatusBar />
      <Taskbar />
      <CounterBubble />
    </div>
  );
}
